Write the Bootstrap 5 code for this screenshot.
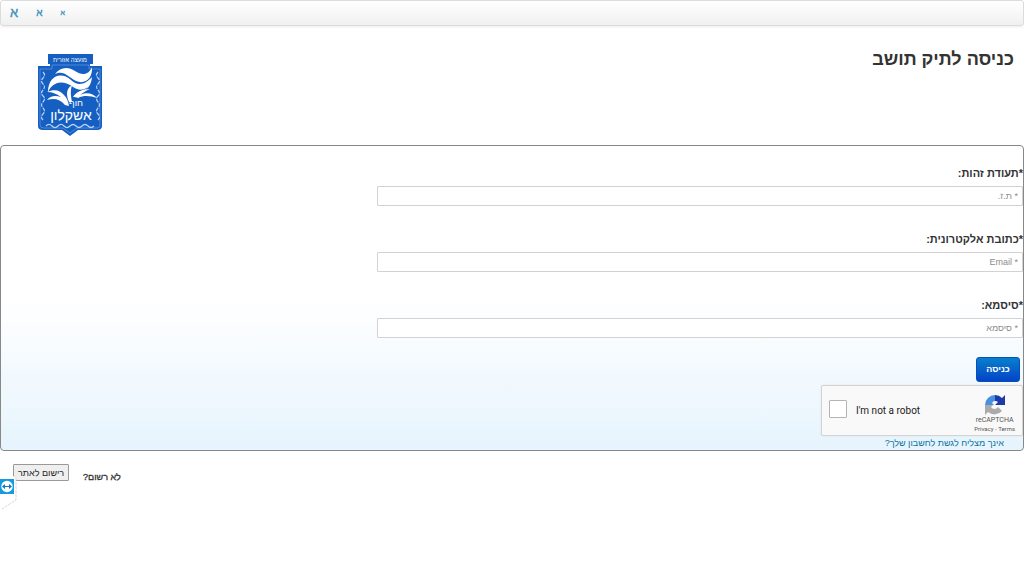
<!DOCTYPE html>
<html lang="he" dir="rtl">
<head>
<meta charset="utf-8">
<meta name="viewport" content="width=device-width, initial-scale=1">
<title>כניסה לתיק תושב</title>
<link rel="stylesheet" href="https://cdn.jsdelivr.net/npm/bootstrap@5.3.0/dist/css/bootstrap.min.css">
<style>
body{font-family:"Liberation Sans",Arial,sans-serif;font-size:9px;line-height:14px;color:#333;background:#fff}
a{color:#08739f;text-decoration:none}
.size-bar{height:26px;border:1px solid #dcdcdc;border-radius:3px;background:linear-gradient(#fff,#f0f0f0);box-shadow:0 1px 3px rgba(0,0,0,.08);gap:18px;padding:0 9px}
.size-bar a{color:#3a8fb9;line-height:26px;-webkit-text-stroke:.3px}
.size-l{font-size:13px}.size-m{font-size:10px}.size-s{font-size:7px}
.page-head{padding:24px 10px 7px 37px}
.page-head h1{font-size:18px;line-height:18px;font-weight:700;margin:0}
.crest{width:67px;height:88px}
.login-box{border:1px solid #888;border-radius:4px;background:linear-gradient(#fff 50%,#e6f4fd);padding-top:17px}
.field-row{margin-bottom:23px}
.field-row label{font-size:11px;line-height:20px;font-weight:700;margin-bottom:3px}
.field-row .form-control{width:63.2%;height:20px;padding:0 4px;border:1px solid #d2d2d2;border-radius:1px;font-size:9px;line-height:18px}
.field-row .form-control::placeholder{color:#8c8c8c}
.field-row.last-field{margin-bottom:19px}
.btn-enter{height:25px;width:44px;padding:0;font-size:9px;font-weight:700;color:#fff;border:1px solid #0650b8;border-radius:3px;background:linear-gradient(#0880cc,#0443c8);margin:0 3px 3px}
.btn-enter:hover{color:#fff}
.robot-box{width:202px;height:51px;background:#f9f9f9;border:1px solid #d3d3d3;border-radius:2px;box-shadow:0 0 2px rgba(0,0,0,.08);font-family:Roboto,sans-serif;padding:0 7px 0 6px}
.robot-box .form-check-input{width:18px;height:18px;margin:0 1px 4px;border:1px solid #b4b4b4;border-radius:1px;float:none}
.robot-box label{font-size:10px;color:#222;margin-left:8px}
.robot-brand{color:#555;font-size:7px;line-height:9px;padding-top:5px}
.robot-brand small{font-size:6px;line-height:8px;white-space:nowrap}
.robot-brand a{color:#555}
.forgot{padding-right:19px}
.join{padding:13px 13px 0;gap:14px}
.join strong{padding-top:6px;font-size:9px;font-weight:400;-webkit-text-stroke:.3px}
.btn-join{height:17px;padding:0 4px;font-size:9px;line-height:14px;color:#222;background:#efefef;border:1px solid #999;border-radius:1px}
.remote-tab{top:476px;left:0;width:17px;height:34px}
</style>
</head>
<body>
<nav class="size-bar d-flex align-items-center justify-content-start" dir="ltr" aria-label="גודל טקסט">
  <a class="size-l" href="#">א</a><a class="size-m" href="#">א</a><a class="size-s" href="#">א</a>
</nav>
<header class="page-head d-flex justify-content-between">
  <h1>כניסה לתיק תושב</h1>
  <svg class="crest" viewBox="0 0 67 88" direction="rtl" role="img" aria-label="חוף אשקלון">
    <path d="M11 4h45v10h-3v2h12v60q0 4-5 4H41l-8 6-8-6H6q-5 0-5-4V16h12v-2h-2z" fill="#165fc2"/>
    <path d="M3 19h12v-4h37v4h11v56q0 3-3 3H40l-7 5-7-5H7q-4 0-4-3z" fill="none" stroke="#74a4e2" stroke-width=".6"/>
    <g fill="#fff">
      <path d="M18 24c5-7 13-8 20-3 7 5 14 4 17-4 1 11-7 18-16 14-8-4-12-11-21-7z"/>
      <path d="M11 42c0-16 13-21 23-12 7 7 15 4 21-3-1 13-11 18-20 11-9-7-19-7-24 4z"/>
      <path d="M14 38c6-8 15-6 22-1 6 4 11 3 15 0-5 6-11 6-17 2-7-4-13-6-20-1z" fill="#165fc2"/>
      <path d="M27 45c-4-5-10-6-17-3 6 0 10 2 14 5-6-2-11-1-14 3 7-2 13-1 18 5l4 1c-1-5-2-8-5-11z"/>
      <path d="M32 52c-3-7-3-13 3-17-2 7-1 11 0 17zM36 47c3-5 9-8 17-8-5 2-7 4-10 6 6-3 13-2 17 3-6-2-13-3-19 0-2-1-3-1-5-1z"/>
    </g>
    <g fill="none" stroke="#b9d2f5" stroke-width="1.200">
      <path d="M9 76q3-3 6 0t6 0 6 0 6 0 6 0 6 0 6 0 6 0"/>
      <path d="M6 22q3 3 0 6t0 6 0 6 0 6 0 6 0 6 0 6 0 6M61 22q-3 3 0 6t0 6 0 6 0 6 0 6 0 6 0 6 0 6" stroke-dasharray="4 1"/>
    </g>
    <g fill="#fff" text-anchor="middle" font-family="Liberation Sans, sans-serif">
      <text x="33" y="12" font-size="6">מועצה אזורית</text>
      <text x="39" y="56" font-size="9">חוף</text>
      <text x="34" y="70" font-size="14">אשקלון</text>
    </g>
  </svg>
</header>
<main>
  <form class="login-box">
    <div class="field-row"><label class="d-block" for="tz">*תעודת זהות:</label><input class="form-control" id="tz" type="text" placeholder="* ת.ז."></div>
    <div class="field-row"><label class="d-block" for="mail">*כתובת אלקטרונית:</label><input class="form-control" id="mail" type="text" placeholder="* Email"></div>
    <div class="field-row last-field"><label class="d-block" for="pass">*סיסמא:</label><input class="form-control" id="pass" type="password" placeholder="* סיסמא"></div>
    <button class="btn btn-enter d-block" type="button">כניסה</button>
    <div class="robot-box d-flex align-items-center" dir="ltr">
      <input class="form-check-input" type="checkbox" id="robot"><label for="robot">I'm not a robot</label>
      <div class="robot-brand ms-auto d-flex flex-column align-items-center">
        <svg width="22" height="22" viewBox="0 0 22 22" aria-hidden="true">
          <path d="M1 11A10 10 0 0 1 11 1v6a4 4 0 0 0-3 2l2 2z" fill="#4a90e2"/>
          <path d="M11 1a10 10 0 0 1 7 3l3-3v10H11l3-3a4 4 0 0 0-3-1z" fill="#1c3aa9"/>
          <path d="M1 11h8l-2 2a4 4 0 0 0 7 0l4 4A10 10 0 0 1 4 18l-3 3z" fill="#ababab"/>
        </svg>
        <span>reCAPTCHA</span>
        <small><a href="#">Privacy</a> - <a href="#">Terms</a></small>
      </div>
    </div>
    <div class="forgot"><a href="#">אינך מצליח לגשת לחשבון שלך?</a></div>
  </form>
</main>
<footer class="join d-flex justify-content-end align-items-start">
  <strong>לא רשום?</strong>
  <button class="btn-join" type="button">רישום לאתר</button>
</footer>
<svg class="remote-tab position-absolute" viewBox="0 0 17 34" aria-hidden="true">
  <path d="M0 0h13q3 0 3 3v21L1 33H0z" fill="#fff"/><path d="M13 0q3 0 3 3v21L2 33" fill="none" stroke="#ccc" stroke-width=".8" stroke-dasharray="3 1"/>
  <rect y="3" width="14" height="15" fill="#159ae0"/><circle cx="7" cy="10.500" r="5.700" fill="#fff"/>
  <path d="M2 10.500l3-2.500v2h4V8l3 2.500L9 13v-2H5v2z" fill="#1078c8"/>
</svg>
<script src="https://cdn.jsdelivr.net/npm/bootstrap@5.3.0/dist/js/bootstrap.bundle.min.js"></script>
</body>
</html>
